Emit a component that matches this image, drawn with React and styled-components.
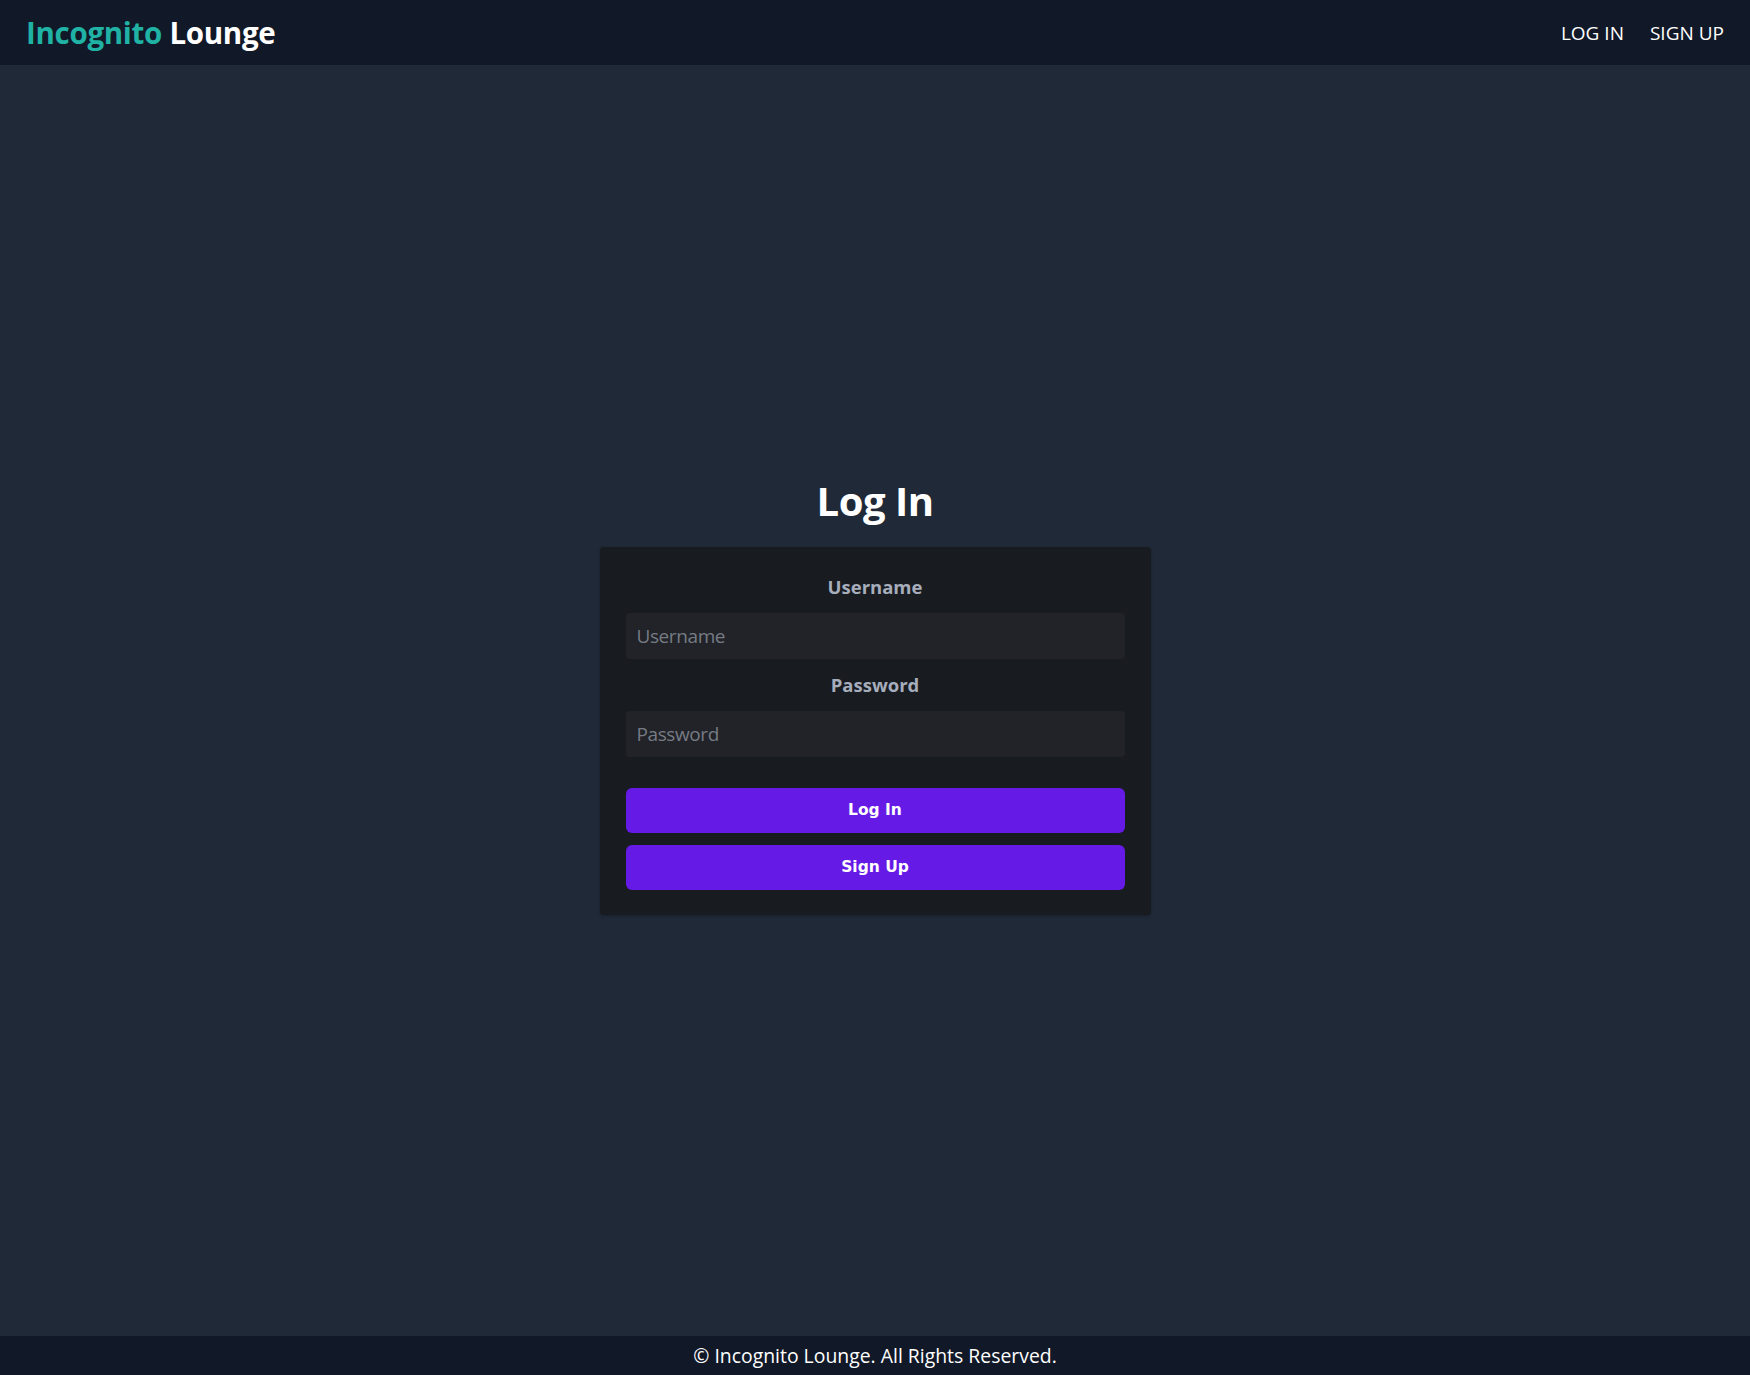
import React from 'react'
import styled, { createGlobalStyle } from 'styled-components'

const GlobalStyle = createGlobalStyle`
    html, body, #root {
        margin : 0;
        height : 100%;
    }
    body {
        background-color : #1f2937;
        font-family : "Open Sans", "Noto Sans", sans-serif;
        color : #ffffff;
    }
    * {
        box-sizing : border-box;
    }
`

const Page = styled.div`
    min-height : 100vh;
    display : flex;
    flex-direction : column;
`

const Header = styled.header`
    height : 65px;
    background-color : #111827;
    display : flex;
    align-items : center;
    justify-content : space-between;
    padding : 0 26px;
`

const Brand = styled.div`
    font-family : "Open Sans", sans-serif;
    font-weight : 700;
    font-size : 29.5px;
    letter-spacing : -0.3px;
    color : #ffffff;
    span {
        color : #1fb2a5;
    }
`

const Nav = styled.nav`
    display : flex;
    gap : 26px;
`

const NavLink = styled.a`
    font-family : "Open Sans", sans-serif;
    font-size : 19px;
    color : #ffffff;
    text-decoration : none;
    text-transform : uppercase;
    cursor : pointer;
`

const Main = styled.main`
    flex : 1;
    display : flex;
    flex-direction : column;
    align-items : center;
    justify-content : center;
    padding-bottom : 14px;
`

const Title = styled.h1`
    margin : 0 0 19.5px;
    font-family : "Open Sans", sans-serif;
    font-size : 40px;
    font-weight : 700;
    letter-spacing : -0.5px;
`

const Card = styled.form`
    width : 551px;
    background-color : #181b20;
    border-radius : 4px;
    padding : 21.5px 26px 25px;
    display : flex;
    flex-direction : column;
    box-shadow : 0 1px 3px rgba(0, 0, 0, 0.25);
`

const Label = styled.label`
    display : block;
    text-align : center;
    font-family : "Open Sans", sans-serif;
    font-weight : 700;
    font-size : 18.5px;
    color : #a6adbb;
    margin : ${p => p.first ? '5px' : '13px'} 0 14px;
`

const Input = styled.input`
    width : 100%;
    height : 46px;
    border : 0;
    outline : none;
    border-radius : 4px;
    background-color : #212328;
    padding : 0 11px;
    font-family : "Open Sans", sans-serif;
    font-size : 19px;
    letter-spacing : -0.4px;
    color : #d1d5db;
    &::placeholder {
        color : #767b84;
    }
`

const Actions = styled.div`
    display : flex;
    flex-direction : column;
    gap : 12px;
    margin-top : 31px;
`

const Button = styled.button`
    height : 45px;
    border : 0;
    border-radius : 6px;
    background-color : #661ae6;
    color : #ffffff;
    font-family : "DejaVu Sans", sans-serif;
    font-weight : 700;
    font-size : 15.5px;
    cursor : pointer;
`

const Footer = styled.footer`
    height : 39px;
    background-color : #111827;
    display : flex;
    align-items : center;
    justify-content : center;
    font-family : "Open Sans", sans-serif;
    font-size : 19.4px;
    color : #ffffff;
`

export default function App() {
    return (
        <Page>
            <GlobalStyle />
            <Header>
                <Brand><span>Incognito</span> Lounge</Brand>
                <Nav>
                    <NavLink>Log In</NavLink>
                    <NavLink>Sign Up</NavLink>
                </Nav>
            </Header>
            <Main>
                <Title>Log In</Title>
                <Card onSubmit={e => e.preventDefault()}>
                    <Label first htmlFor='username'>Username</Label>
                    <Input id='username' placeholder='Username' />
                    <Label htmlFor='password'>Password</Label>
                    <Input id='password' type='password' placeholder='Password' />
                    <Actions>
                        <Button type='submit'>Log In</Button>
                        <Button type='button'>Sign Up</Button>
                    </Actions>
                </Card>
            </Main>
            <Footer>© Incognito Lounge. All Rights Reserved.</Footer>
        </Page>
    )
}
